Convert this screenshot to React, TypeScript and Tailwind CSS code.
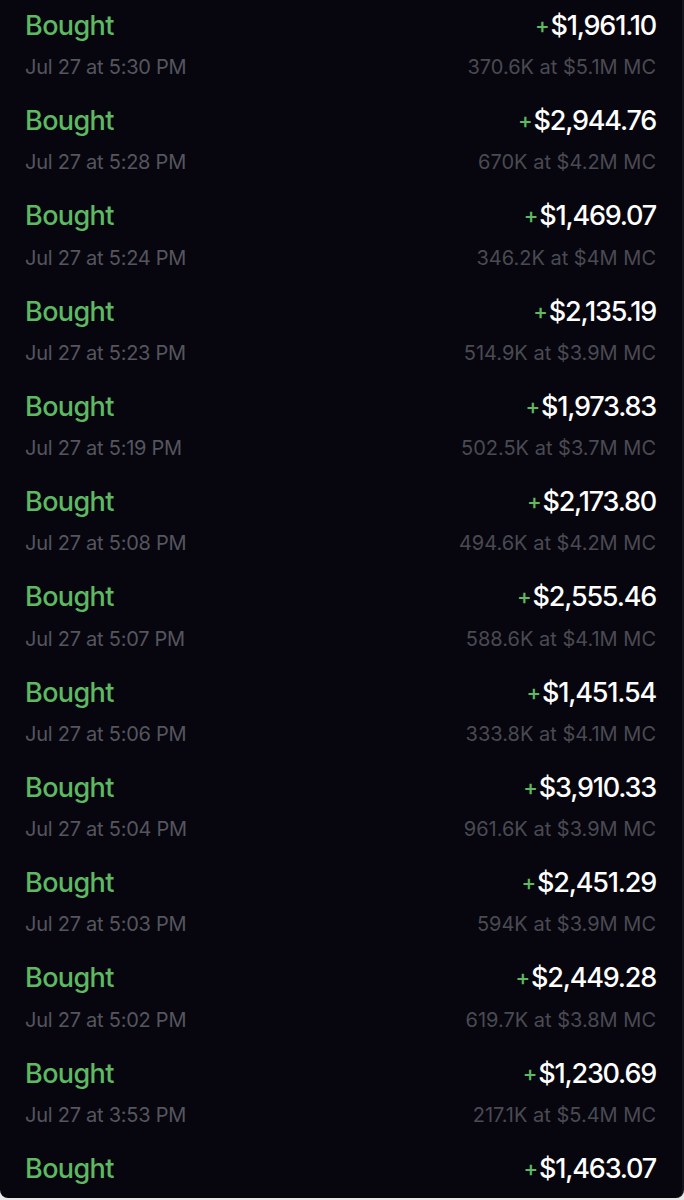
const trades = [
  { amount: '1,961.10', time: '5:30 PM', size: '370.6K', mc: '$5.1M' },
  { amount: '2,944.76', time: '5:28 PM', size: '670K', mc: '$4.2M' },
  { amount: '1,469.07', time: '5:24 PM', size: '346.2K', mc: '$4M' },
  { amount: '2,135.19', time: '5:23 PM', size: '514.9K', mc: '$3.9M' },
  { amount: '1,973.83', time: '5:19 PM', size: '502.5K', mc: '$3.7M' },
  { amount: '2,173.80', time: '5:08 PM', size: '494.6K', mc: '$4.2M' },
  { amount: '2,555.46', time: '5:07 PM', size: '588.6K', mc: '$4.1M' },
  { amount: '1,451.54', time: '5:06 PM', size: '333.8K', mc: '$4.1M' },
  { amount: '3,910.33', time: '5:04 PM', size: '961.6K', mc: '$3.9M' },
  { amount: '2,451.29', time: '5:03 PM', size: '594K', mc: '$3.9M' },
  { amount: '2,449.28', time: '5:02 PM', size: '619.7K', mc: '$3.8M' },
  { amount: '1,230.69', time: '3:53 PM', size: '217.1K', mc: '$5.4M' },
  { amount: '1,463.07', time: '', size: '', mc: '' },
]

function TradeRow({ t }: { t: (typeof trades)[number] }) {
  return (
    <div className="pt-[13px] pb-[14.25px] pl-[25px] pr-[26px]">
      <div className="flex items-center justify-between h-[30px] font-medium">
        <span className="text-[27px] text-[#5dba62] tracking-[-0.6px]">Bought</span>
        <span className="text-[27px] text-white tracking-[-1.2px]">
          <span className="text-[#5dba62] text-[22px] mr-[2px] align-[2px]">+</span>${t.amount}
        </span>
      </div>
      {t.time && (
        <div className="flex items-center justify-between h-[24px] mt-[14px] text-[20px]">
          <span className="text-[#55555e] tracking-[-0.25px]">Jul 27 at {t.time}</span>
          <span className="text-[#4a4a53] tracking-[0px]">
            {t.size} at {t.mc} MC
          </span>
        </div>
      )}
    </div>
  )
}

export default function App() {
  return (
    <div className="w-[684px] h-[1200px] bg-[#e8e8ea] overflow-hidden" style={{ fontFamily: 'Inter, "Liberation Sans", sans-serif' }}>
      <div className="h-[1198px] bg-[#07060e] rounded-b-[8px] border-r-2 border-[#16151d] overflow-hidden">
        <div className="-mt-[2px]">
          {trades.map((t, i) => (
            <TradeRow key={i} t={t} />
          ))}
        </div>
      </div>
    </div>
  )
}
